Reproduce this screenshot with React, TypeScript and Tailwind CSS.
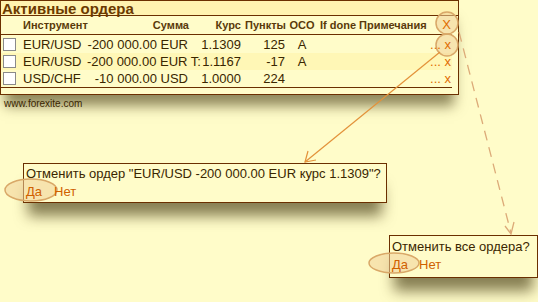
import React from "react";

const rows = [
  { sym: "EUR/USD", sum: "-200 000.00 EUR", rate: "1.1309", pts: "125", oco: "A", alt: false },
  { sym: "EUR/USD", sum: "-200 000.00 EUR T:", rate: "1.1167", pts: "-17", oco: "A", alt: true },
  { sym: "USD/CHF", sum: "-10 000.00 USD", rate: "1.0000", pts: "224", oco: "", alt: false },
];

function Overlay() {
  return (
    <svg className="absolute inset-0 pointer-events-none" width="538" height="302">
      <g fill="#f0cf98" fillOpacity="0.55" stroke="#d9a868" strokeWidth="1.5">
        <circle cx="447" cy="23" r="11" />
        <circle cx="447" cy="45" r="11" />
        <ellipse cx="31" cy="190" rx="26" ry="11" />
        <ellipse cx="394" cy="263" rx="25" ry="10" />
      </g>
      <g stroke="#e3923a" strokeWidth="1.2" fill="none">
        <line x1="440" y1="52" x2="305" y2="162" />
        <polyline points="308,151 305,162 316,160" />
      </g>
      <g stroke="#dcaa78" strokeWidth="1.3" fill="none">
        <line x1="459" y1="32" x2="511" y2="233" strokeDasharray="10 7" />
        <polyline points="505,226 511,234 514,222" />
      </g>
    </svg>
  );
}

export default function App() {
  return (
    <div
      className="relative w-[538px] h-[302px] overflow-hidden bg-[#fffcc9] text-[#3a2600]"
      style={{ fontFamily: '"Liberation Sans", Arial, sans-serif' }}
    >
      <div className="w-[459px] h-[95px] border border-[#6b2f00] bg-[#fffcc9] shadow-[0_16px_12px_-5px_rgba(70,60,20,0.6)]">
        <div className="h-[15px] bg-[#fff3b0] border-b border-[#6b2f00] px-[1px] text-[15px] leading-[15px] font-bold text-[#6b3a00]">
          Активные ордера
        </div>
        <div className="w-[451px]">
          <div className="flex h-[19px] items-center border-b border-[#6b2f00] text-[11px] font-bold text-[#5a3a0a]">
            <div className="w-[20px]" />
            <div className="w-[66px] pl-[2px]">Инструмент</div>
            <div className="w-[104px] text-right pr-[2px]">Сумма</div>
            <div className="w-[52px] text-right pr-[2px]">Курс</div>
            <div className="w-[44px] text-right pr-[1px]">Пункты</div>
            <div className="w-[30px] text-center">OCO</div>
            <div className="w-[42px] text-center">If done</div>
            <div className="flex-1 flex items-center justify-between">
              <span>Примечания</span>
              <span className="relative z-10 font-normal text-[13px] text-[#e06c00] pr-[1px]">X</span>
            </div>
          </div>
          {rows.map((r, i) => (
            <div
              key={i}
              className={`flex h-[17px] items-center text-[13px] ${r.alt ? "bg-[#fff7b6]" : ""} ${i === 0 ? "mt-[1px]" : ""}`}
            >
              <div className="w-[20px] pl-[2px]">
                <div className="w-[13px] h-[13px] bg-white border border-[#8a8a8a]" />
              </div>
              <div className="w-[66px] pl-[2px]">{r.sym}</div>
              <div className="w-[104px] text-right pr-[3px] whitespace-nowrap">{r.sum}</div>
              <div className="w-[52px] text-right pr-[2px]">{r.rate}</div>
              <div className="w-[44px] text-right pr-[2px]">{r.pts}</div>
              <div className="w-[30px] text-center">{r.oco}</div>
              <div className="w-[42px]" />
              <div className="relative z-10 flex-1 text-right pr-[1px] text-[#e06c00] whitespace-nowrap">... x</div>
            </div>
          ))}
          <div className="border-b border-[#6b2f00]" />
        </div>
      </div>
      <div className="pl-[4px] pt-[1px] text-[10px] text-[#3a2600]">www.forexite.com</div>

      <div className="absolute left-[23px] top-[163px] w-[364px] h-[40px] border border-[#6b2f00] bg-[#fffcc9] px-[2px] pt-[2px] text-[13px] leading-[16px] shadow-[0_18px_14px_-5px_rgba(70,60,20,0.65)]">
        <div>Отменить ордер "EUR/USD -200 000.00 EUR курс 1.1309"?</div>
        <div className="relative z-10 flex gap-[12px] text-[#d06000] mt-[2px]">
          <span>Да</span>
          <span>Нет</span>
        </div>
      </div>

      <div className="absolute left-[389px] top-[235px] w-[149px] h-[43px] border border-[#6b2f00] bg-[#fffcc9] px-[2px] pt-[3px] text-[13px] leading-[16px] shadow-[0_18px_14px_-5px_rgba(70,60,20,0.65)]">
        <div>Отменить все ордера?</div>
        <div className="relative z-10 flex gap-[11px] text-[#d06000] mt-[2px]">
          <span>Да</span>
          <span>Нет</span>
        </div>
      </div>

      <Overlay />
    </div>
  );
}
